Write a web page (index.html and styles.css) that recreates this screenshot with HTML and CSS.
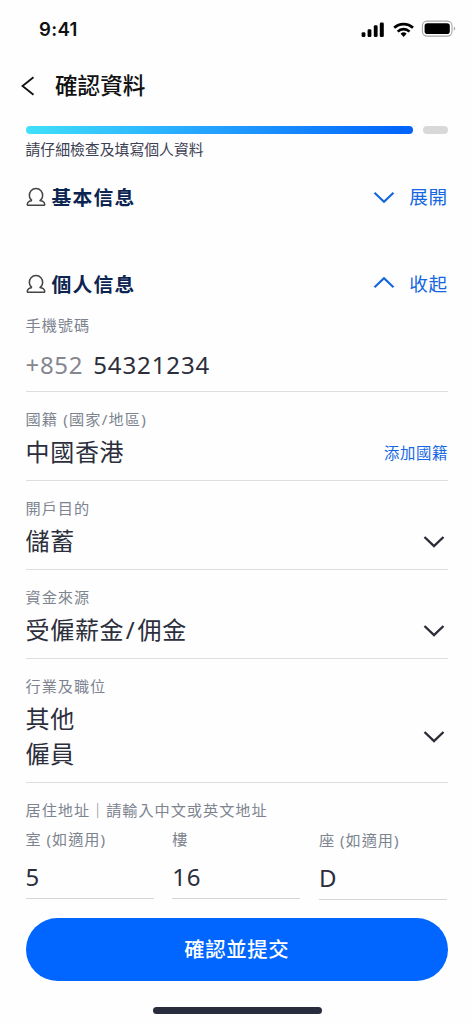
FILE: index.html
```html
<!DOCTYPE html>
<html lang="zh-Hant">
<head>
<meta charset="utf-8">
<meta name="viewport" content="width=device-width">
<title>確認資料</title>
<link rel="stylesheet" href="styles.css">
</head>
<body>
<div class="screen">
  <div class="status">
    <span class="clock">9:41</span>
    <svg class="status-icons" width="96" height="20" viewBox="0 0 96 20">
      <g fill="#000">
        <rect x="0.6" y="13.2" width="3.8" height="4.8" rx="1.3"/>
        <rect x="6.6" y="10.2" width="3.8" height="7.8" rx="1.3"/>
        <rect x="12.8" y="6.2" width="3.8" height="11.8" rx="1.3"/>
        <rect x="18.8" y="3.6" width="4" height="14.4" rx="1.3"/>
        <path d="M42.6 17.9l-3-3.2a4.4 4.4 0 0 1 6 0z"/>
        <rect x="63.6" y="4.2" width="25.2" height="10.8" rx="2.8"/>
        <path d="M92.8 7.6v4.2c2-.9 2-3.3 0-4.2z" fill="#aaa"/>
      </g>
      <g fill="none" stroke="#000" stroke-width="2.7">
        <path d="M36.7 12.6a8.4 8.4 0 0 1 11.8 0"/>
        <path d="M33.2 8.8a13.6 13.6 0 0 1 18.8 0"/>
      </g>
      <rect x="61.4" y="2.1" width="29.6" height="15" rx="4.6" fill="none" stroke="#a6a6a6" stroke-width="1.1"/>
    </svg>
  </div>

  <header class="header">
    <svg class="back" width="14" height="20" viewBox="0 0 14 20"><path d="M12.5 1.3L1.5 10l11 8.7" fill="none" stroke="#111" stroke-width="1.8"/></svg>
    <h1 class="title">確認資料</h1>
  </header>

  <main class="content">
    <div class="progress"><span class="done"></span><span class="todo"></span></div>
    <p class="note">請仔細檢查及填寫個人資料</p>

    <section class="section-head first">
      <svg class="person" width="20" height="20" viewBox="0 0 20 20"><path d="M6 13.6A6.7 6.7 0 1 1 14 13.6C16.8 14 18.4 15 18.7 17.2Q18.8 18.2 17.8 18.2H2.2Q1.2 18.2 1.3 17.2C1.6 15 3.2 14 6 13.6" /></svg>
      <h2 class="section-title">基本信息</h2>
      <a class="toggle"><svg width="22" height="14" viewBox="0 0 22 14"><path d="M1.5 2.7l9.5 9 9.5-9" class="chev"/></svg><span>展開</span></a>
    </section>

    <section class="section-head">
      <svg class="person" width="20" height="20" viewBox="0 0 20 20"><path d="M6 13.6A6.7 6.7 0 1 1 14 13.6C16.8 14 18.4 15 18.7 17.2Q18.8 18.2 17.8 18.2H2.2Q1.2 18.2 1.3 17.2C1.6 15 3.2 14 6 13.6" /></svg>
      <h2 class="section-title">個人信息</h2>
      <a class="toggle"><svg width="22" height="14" viewBox="0 0 22 14"><path d="M1.5 10.2l9.5-9 9.5 9" class="chev"/></svg><span>收起</span></a>
    </section>

    <div class="field phone">
      <div class="label">手機號碼</div>
      <div class="value"><span class="prefix">+852</span><span class="number">54321234</span></div>
    </div>
    <div class="field">
      <div class="label wide">國籍 (國家/地區)</div>
      <div class="row"><div class="value">中國香港</div><a class="add">添加國籍</a></div>
    </div>
    <div class="field">
      <div class="label">開戶目的</div>
      <div class="row"><div class="value">儲蓄</div><svg class="arrow" width="22" height="14" viewBox="0 0 22 14"><path d="M1.5 2l9.5 9 9.5-9"/></svg></div>
    </div>
    <div class="field">
      <div class="label">資金來源</div>
      <div class="row"><div class="value">受僱薪金<span class="slash">/</span>佣金</div><svg class="arrow" width="22" height="14" viewBox="0 0 22 14"><path d="M1.5 2l9.5 9 9.5-9"/></svg></div>
    </div>
    <div class="field tall">
      <div class="label">行業及職位</div>
      <div class="row"><div class="value">其他<br>僱員</div><svg class="arrow" width="22" height="14" viewBox="0 0 22 14"><path d="M1.5 2l9.5 9 9.5-9"/></svg></div>
    </div>

    <div class="address">
      <div class="label">居住地址｜請輸入中文或英文地址</div>
      <div class="parts">
        <div class="part"><div class="label">室 (如適用)</div><div class="value">5</div></div>
        <div class="part"><div class="label">樓</div><div class="value">16</div></div>
        <div class="part last"><div class="label">座 (如適用)</div><div class="value">D</div></div>
      </div>
    </div>

    <button class="submit">確認並提交</button>
  </main>
  <div class="home"></div>
</div>
</body>
</html>
```
FILE: styles.css
```css
* { box-sizing: border-box; }
body {
  margin: 0;
  background: #fefefe;
  font-family: "Noto Sans", "Noto Sans CJK TC", sans-serif;
}
.screen {
  width: 473px;
  height: 1024px;
  overflow: hidden;
  display: flex;
  flex-direction: column;
}
h1, h2, p { margin: 0; }
svg { display: block; flex: none; }

.status {
  height: 58px;
  padding: 0 16px 0 39px;
  display: flex;
  align-items: center;
  justify-content: space-between;
}
.clock {
  font: 600 18.6px/20px Inter, sans-serif;
  letter-spacing: 0.3px;
  color: #111;
}
.header {
  height: 56px;
  padding-left: 21px;
  display: flex;
  align-items: center;
  gap: 20px;
}
.title {
  font: 500 22.6px/32px "Noto Sans CJK TC", sans-serif;
  padding-bottom: 2px;
  color: #111;
}

.content { padding: 12px 25px 0 25.5px; }
.progress { display: flex; gap: 10px; height: 8px; }
.done {
  width: 387px;
  border-radius: 4px;
  background: linear-gradient(90deg, #40e0fa 0%, #229fff 50%, #0062fb 100%);
}
.todo { width: 25px; border-radius: 4px; background: #d8d8d8; }
.note {
  font: 400 14.85px/20px "Noto Sans CJK TC", sans-serif;
  margin-top: 5px;
  color: #3c4053;
}

.section-head {
  display: flex;
  align-items: center;
  height: 30px;
  margin-bottom: 15px;
}
.section-head.first { margin: 23px 0 57px; }
.person path {
  fill: none;
  stroke: #444;
  stroke-width: 1.5;
  stroke-linejoin: round;
}
.section-title {
  font: 700 19.8px/30px "Noto Sans CJK TC", sans-serif;
  letter-spacing: 1.2px;
  color: #0b2450;
  margin-left: 6px;
}
.toggle {
  margin-left: auto;
  display: flex;
  align-items: center;
  gap: 14px;
  color: #1467e0;
  font: 400 18.6px/28px "Noto Sans CJK TC", sans-serif;
  letter-spacing: 0.8px;
}
.toggle span { padding-bottom: 2px; }
.chev { fill: none; stroke: #1467e0; stroke-width: 2.2; }

.field {
  height: 89px;
  padding-top: 16px;
  border-bottom: 1px solid #dedee0;
}
.field.phone { height: 78px; padding-top: 0; }
.field.tall { height: 124px; }
.label {
  font-size: 15.2px;
  line-height: 22px;
  letter-spacing: 0.95px;
  color: #7d8490;
  white-space: nowrap;
}
.label.wide { letter-spacing: 1.15px; }
.value {
  font-size: 24px;
  line-height: 35px;
  letter-spacing: 0.7px;
  color: #2c2e3c;
}
.phone .value { padding-top: 11px; display: flex; gap: 10px; }
.phone .prefix { color: #858790; }
.phone .number { letter-spacing: 0.9px; }
.slash { margin: 0 2px 0 1.5px; }
.row {
  margin-top: 4px;
  display: flex;
  align-items: center;
  justify-content: space-between;
}
.add {
  font: 400 15.4px/22px "Noto Sans CJK TC", sans-serif;
  letter-spacing: 0.6px;
  color: #1468e4;
}
.arrow { margin: 2px 3px 0 0; }
.arrow path { fill: none; stroke: #2b2d38; stroke-width: 2.4; }

.address { padding-top: 16px; }
.parts {
  display: grid;
  grid-template-columns: 128px 128px 128px;
  justify-content: space-between;
  width: 421.5px;
  margin-top: 7px;
}
.part { height: 71px; border-bottom: 1px solid #d6d6da; }
.part.last { height: 72px; padding-top: 1px; }
.part .value { padding-top: 9px; }

.submit {
  display: block;
  width: 422.5px;
  height: 63px;
  margin: 18px 0 0;
  padding: 0 0 3px;
  border: 0;
  border-radius: 32px;
  background: #0066ff;
  color: #fff;
  font: 500 20.4px/30px "Noto Sans CJK TC", sans-serif;
  letter-spacing: 0.6px;
}
.home {
  width: 169px;
  height: 7px;
  margin: 26px 0 0 153px;
  border-radius: 4px;
  background: #292c3d;
}
```
